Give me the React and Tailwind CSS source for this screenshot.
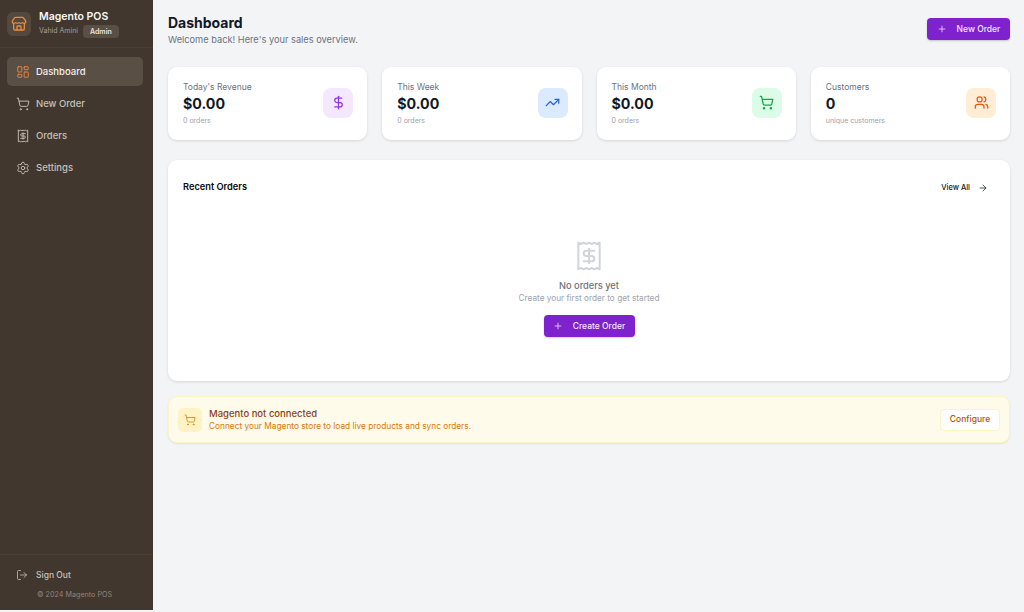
import React from "react";
import { LayoutDashboard, ShoppingCart, Receipt, Settings, LogOut, Store, Plus, DollarSign, TrendingUp, Users, ArrowRight } from "lucide-react";

const Nav = ({ icon: I, label, active }) => (
  <div className={`flex items-center gap-[6px] h-[29px] px-[9px] rounded-[5px] text-[9.5px] font-medium ${active ? "bg-[#5a4f45] text-[#f1efed]" : "text-[#c5c0ba]"}`}>
    <I size={14} strokeWidth={1.6} className={active ? "text-[#e8893f]" : "text-[#c5c0ba]"} />
    <span className="pt-[1px]">{label}</span>
  </div>
);

const Stat = ({ title, value, sub, icon: I, box, color }) => (
  <div className="flex-1 h-[73px] bg-white rounded-[9px] shadow-[0_1px_3px_rgba(0,0,0,0.12)] pl-[15px] pr-[14px] flex items-center justify-between">
    <div className="flex flex-col">
      <span className="text-[8.5px] leading-[15px] text-[#6b7280]">{title}</span>
      <span className="text-[14.25px] leading-[20px] font-bold text-[#111827] -mt-[1px]">{value}</span>
      <span className="text-[7px] leading-[14px] text-[#9ca3af]">{sub}</span>
    </div>
    <div className={`w-[30px] h-[30px] rounded-[8px] flex items-center justify-center mb-[2px] ${box}`}>
      <I size={15} strokeWidth={2} className={color} />
    </div>
  </div>
);

const Btn = ({ label, w }) => (
  <div className={`h-[22px] ${w} bg-[#7e22ce] rounded-[4px] shadow-[0_1px_2px_rgba(0,0,0,0.2)] flex items-center justify-center gap-[10px] text-[8.5px] font-medium text-[#f3e8ff]`}>
    <Plus size={10} strokeWidth={1.8} />
    <span>{label}</span>
  </div>
);

export default function App() {
  return (
    <div className="w-[1024px] h-[612px] overflow-hidden bg-[#f3f4f6] flex items-start font-['Inter',sans-serif]">
      <aside className="w-[153px] h-[610px] bg-[#42372e] flex flex-col shrink-0">
        <div className="h-[48px] px-[7px] flex items-center gap-[8px] border-b border-[#4b4036]">
          <div className="w-[24px] h-[24px] rounded-[6px] bg-[#54493f] flex items-center justify-center">
            <Store size={16} strokeWidth={2} className="text-[#ea8a3c]" />
          </div>
          <div className="flex flex-col">
            <span className="text-[10.5px] leading-[14px] font-semibold text-[#f7f6f5]">Magento POS</span>
            <div className="flex items-center gap-[5px] mt-[1px]">
              <span className="text-[7px] text-[#a89f95]">Vahid Amini</span>
              <span className="h-[13px] px-[7px] rounded-[4px] bg-[#5a4f45] text-[7px] leading-[13px] font-semibold text-[#e8e5e2]">Admin</span>
            </div>
          </div>
        </div>
        <nav className="flex flex-col gap-[3px] pl-[7px] pr-[10px] pt-[9px]">
          <Nav icon={LayoutDashboard} label="Dashboard" active />
          <Nav icon={ShoppingCart} label="New Order" />
          <Nav icon={Receipt} label="Orders" />
          <Nav icon={Settings} label="Settings" />
        </nav>
        <div className="mt-auto border-t border-[#4b4036] h-[56px] pl-[16px] pr-[17px] pt-[14px]">
          <div className="flex items-center gap-[8px] text-[8.5px] font-medium text-[#c5c0ba]">
            <LogOut size={12} strokeWidth={1.6} />
            <span>Sign Out</span>
          </div>
          <div className="mt-[8px] ml-[21px] text-[7.2px] text-[#8f857a]">© 2024 Magento POS</div>
        </div>
      </aside>
      <main className="flex-1 pl-[15px] pr-[14px] pt-[14px] flex flex-col">
        <header className="flex items-start justify-between h-[53px]">
          <div className="flex flex-col">
            <h1 className="text-[14px] leading-[18px] font-bold text-[#111827]">Dashboard</h1>
            <p className="text-[9.25px] leading-[14px] mt-[1px] text-[#6b7280]">Welcome back! Here's your sales overview.</p>
          </div>
          <div className="mt-[4px]"><Btn label="New Order" w="w-[83px]" /></div>
        </header>
        <section className="flex gap-[15px]">
          <Stat title="Today's Revenue" value="$0.00" sub="0 orders" icon={DollarSign} box="bg-[#f3e8ff]" color="text-[#9333ea]" />
          <Stat title="This Week" value="$0.00" sub="0 orders" icon={TrendingUp} box="bg-[#dbeafe]" color="text-[#2563eb]" />
          <Stat title="This Month" value="$0.00" sub="0 orders" icon={ShoppingCart} box="bg-[#dcfce7]" color="text-[#16a34a]" />
          <Stat title="Customers" value="0" sub="unique customers" icon={Users} box="bg-[#ffedd5]" color="text-[#ea580c]" />
        </section>
        <section className="mt-[20px] h-[221px] bg-white rounded-[9px] shadow-[0_1px_3px_rgba(0,0,0,0.12)] flex flex-col">
          <div className="flex items-center justify-between pl-[15px] pr-[22px] pt-[20px]">
            <span className="text-[9.25px] leading-[14px] font-semibold text-[#0a0a0a]">Recent Orders</span>
            <div className="flex items-center gap-[8px] text-[7.5px] font-medium text-[#111827] mt-[1px]">
              <span>View All</span>
              <ArrowRight size={10} strokeWidth={1.8} />
            </div>
          </div>
          <div className="flex flex-col items-center pt-[46px]">
            <Receipt size={32} strokeWidth={1.5} className="text-[#d1d5db]" />
            <span className="mt-[7px] text-[9.25px] leading-[14px] font-medium text-[#6b7280]">No orders yet</span>
            <span className="text-[8.25px] leading-[12px] -mt-[1px] text-[#9ca3af]">Create your first order to get started</span>
            <div className="mt-[11px]"><Btn label="Create Order" w="w-[91px]" /></div>
          </div>
        </section>
        <section className="mt-[15px] h-[47px] bg-[#fffbeb] border border-[#fef3c7] rounded-[9px] shadow-[0_1px_2px_rgba(0,0,0,0.08)] px-[9px] flex items-center justify-between">
          <div className="flex items-center gap-[7px]">
            <div className="w-[24px] h-[24px] rounded-[5px] bg-[#fef3c7] flex items-center justify-center">
              <ShoppingCart size={12} strokeWidth={1.8} className="text-[#e08a1a]" />
            </div>
            <div className="flex flex-col">
              <span className="text-[9.5px] leading-[13px] font-medium text-[#92400e]">Magento not connected</span>
              <span className="text-[8.3px] leading-[12px] text-[#d97706]">Connect your Magento store to load live products and sync orders.</span>
            </div>
          </div>
          <div className="w-[60px] h-[22px] bg-white border border-[#fef3c7] rounded-[4px] flex items-center justify-center text-[8.5px] font-medium text-[#b45309]">Configure</div>
        </section>
      </main>
    </div>
  );
}
